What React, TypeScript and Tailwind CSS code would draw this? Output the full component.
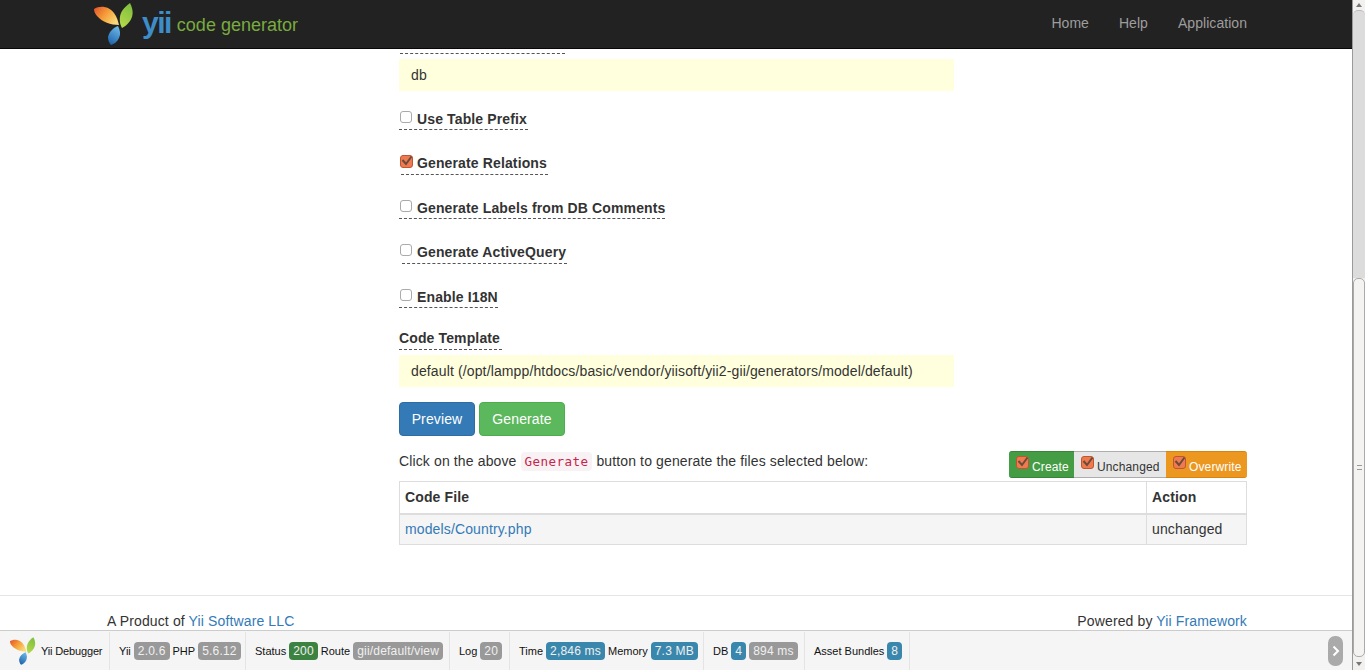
import { ReactNode } from 'react';

function YiiLeaves({ className }: { className: string }) {
  return (
    <svg viewBox="0 0 40 46" className={className}>
      <defs>
        <linearGradient id="leafOrange" x1="0" y1="0" x2="1" y2="0.6">
          <stop offset="0" stopColor="#e2502a" />
          <stop offset="0.55" stopColor="#f6a13a" />
          <stop offset="1" stopColor="#f8d879" />
        </linearGradient>
        <linearGradient id="leafGreen" x1="0.7" y1="0" x2="0.3" y2="1">
          <stop offset="0" stopColor="#7fbf3f" />
          <stop offset="1" stopColor="#b6d84a" />
        </linearGradient>
        <linearGradient id="leafBlue" x1="0.7" y1="0" x2="0.3" y2="1">
          <stop offset="0" stopColor="#6bb8e8" />
          <stop offset="1" stopColor="#1f63ab" />
        </linearGradient>
      </defs>
      <path d="M0 8 C6 4 15 5 20 12 C23 16 24 20 25 24 C17 24 8 21 3 15 C1 13 0 10 0 8 Z" fill="url(#leafOrange)" />
      <path d="M36 2 C39 8 40 14 36 20 C33 24 30 26 28 27 C25 22 25 15 28 10 C30 7 33 4 36 2 Z" fill="url(#leafGreen)" />
      <path d="M24 25 C26 29 27 33 25 37 C23 41 20 43 17 44 C15 42 14 39 14 36 C15 31 19 27 24 25 Z" fill="url(#leafBlue)" />
    </svg>
  );
}

function CheckIcon() {
  return (
    <span className="relative inline-block h-[13px] w-[13px] rounded-[3px] border border-[#c0562f] bg-[#ee7a50]">
      <svg viewBox="0 0 13 13" className="absolute left-[-1px] top-[-2px] h-[13px] w-[13px]">
        <path d="M2.5 6 L6 10 L11.5 2.5" fill="none" stroke="#6b4a3a" strokeWidth="2" />
      </svg>
    </span>
  );
}

function EmptyBox() {
  return <span className="inline-block h-[12px] w-[12px] rounded-[3px] border border-[#aaa] bg-white" />;
}

function CheckField({ label, checked, wrap }: { label: string; checked?: boolean; wrap: string }) {
  return (
    <div className={wrap}>
      <div className="relative flex h-[20px] items-center">
        <span className="absolute left-[1px] top-[2px] flex">{checked ? <CheckIcon /> : <EmptyBox />}</span>
        <span className="ml-[18px] font-bold">{label}</span>
      </div>
    </div>
  );
}

function Badge({ children, color = 'bg-[#999]' }: { children: ReactNode; color?: string }) {
  return (
    <span className={`whitespace-nowrap rounded-[4px] ${color} px-[4px] text-[12px] leading-[18px] tracking-[0.2px] text-[#f0f0f0]`}>
      {children}
    </span>
  );
}

function DebugBlock({ children, width }: { children: ReactNode; width: string }) {
  return (
    <div className={`flex h-full items-center gap-[3px] whitespace-nowrap border-r border-[#e4e4e4] pl-[9px] ${width}`}>{children}</div>
  );
}

function FilterButton({ label, color, width, first, last }: { label: string; color: string; width: string; first?: boolean; last?: boolean }) {
  return (
    <span
      className={`flex h-[27px] items-center gap-[3px] border-y pl-[7px] text-[12px] ${width} ${color} ${first ? 'rounded-l-[3px]' : ''} ${last ? 'rounded-r-[3px]' : ''}`}
    >
      <span className="mt-[-5px] flex">
        <CheckIcon />
      </span>
      <span className="mt-[4px]">{label}</span>
    </span>
  );
}

export default function App() {
  return (
    <div className="flex h-[670px] w-[1365px] overflow-hidden bg-white font-['Liberation_Sans',Arial,sans-serif] text-[14px] tracking-[0.13px] text-[#333]">
      <div className="flex h-full w-[1352px] flex-col">
        <header className="flex h-[49px] shrink-0 items-center justify-between border-b border-[#080808] bg-[#222] pl-[94px] pr-[105px]">
          <div className="flex items-center">
            <YiiLeaves className="h-[46px] w-[40px]" />
            <span className="ml-[8px] mt-[-2px] text-[30px] font-bold leading-[40px] tracking-[-1.5px] text-[#3d8dc9]">yii</span>
            <span className="ml-[6px] mt-[3px] text-[18px] tracking-normal text-[#79ab3f]">code generator</span>
          </div>
          <nav className="mt-[-2px] flex gap-[30px] tracking-[0.05px] text-[#9d9d9d]">
            <span>Home</span>
            <span>Help</span>
            <span>Application</span>
          </nav>
        </header>

        <main className="flex-1 pl-[399px] pr-[105px]">
          <div className="ml-[1px] mt-[4px] w-[165px] border-b border-dashed border-[#555]" />
          <div className="mt-[5px] flex h-[32px] w-[555px] items-center bg-[#ffd] px-[12px]">db</div>

          <CheckField wrap="mt-[18px]" label="Use Table Prefix" />
          <div className="w-[129px] border-b border-dashed border-[#555]" />
          <CheckField wrap="mt-[23px]" label="Generate Relations" checked />
          <div className="ml-[2px] mt-[1px] w-[147px] border-b border-dashed border-[#555]" />
          <CheckField wrap="mt-[23px]" label="Generate Labels from DB Comments" />
          <div className="w-[266px] border-b border-dashed border-[#555]" />
          <CheckField wrap="mt-[23px]" label="Generate ActiveQuery" />
          <div className="ml-[3px] mt-[1px] w-[165px] border-b border-dashed border-[#555]" />
          <CheckField wrap="mt-[23px]" label="Enable I18N" />
          <div className="w-[99px] border-b border-dashed border-[#555]" />

          <div className="mt-[20px] flex h-[21px] items-center font-bold">Code Template</div>
          <div className="w-[103px] border-b border-dashed border-[#555]" />
          <div className="mt-[5px] flex h-[32px] w-[555px] items-center bg-[#ffd] px-[12px]">
            default (/opt/lampp/htdocs/basic/vendor/yiisoft/yii2-gii/generators/model/default)
          </div>

          <div className="mt-[15px] flex gap-[4px]">
            <span className="flex h-[34px] w-[76px] items-center justify-center rounded-[4px] border border-[#2e6da4] bg-[#337ab7] text-white">Preview</span>
            <span className="flex h-[34px] w-[86px] items-center justify-center rounded-[4px] border border-[#4cae4c] bg-[#5cb85c] text-white">Generate</span>
          </div>

          <div className="mt-[15px] flex h-[27px] items-start justify-between">
            <p className="flex items-center leading-[20px]">
              Click on the above
              <code className="mx-[4px] rounded-[4px] bg-[#f9f2f4] px-[4px] font-['DejaVu_Sans_Mono',monospace] text-[12.6px] leading-[19px] tracking-[0.4px] text-[#c7254e]">Generate</code>
              button to generate the files selected below:
            </p>
            <div className="flex">
              <FilterButton first label="Create" width="w-[65px]" color="border-[#398439] bg-[#449d44] text-white" />
              <FilterButton label="Unchanged" width="w-[92px]" color="border-[#adadad] bg-[#e6e6e6] text-[#333]" />
              <FilterButton last label="Overwrite" width="w-[81px]" color="border-[#d58512] bg-[#ec971f] text-white" />
            </div>
          </div>

          <table className="mt-[3px] w-full border-collapse border border-[#ddd]">
            <thead>
              <tr className="h-[32px]">
                <th className="border border-b-2 border-[#ddd] px-[5px] text-left font-bold">Code File</th>
                <th className="w-[100px] border border-b-2 border-[#ddd] px-[5px] text-left font-bold">Action</th>
              </tr>
            </thead>
            <tbody>
              <tr className="h-[31px] bg-[#f5f5f5]">
                <td className="border border-[#ddd] px-[5px] text-[#337ab7]">models/Country.php</td>
                <td className="border border-[#ddd] px-[5px]">unchanged</td>
              </tr>
            </tbody>
          </table>
        </main>

        <footer className="flex h-[35px] shrink-0 items-start justify-between border-t border-[#e5e5e5] pl-[107px] pr-[105px] pt-[15px] leading-[20px]">
          <span>
            A Product of <span className="text-[#337ab7]">Yii Software LLC</span>
          </span>
          <span>
            Powered by <span className="text-[#337ab7]">Yii Framework</span>
          </span>
        </footer>

        <div className="flex h-[40px] shrink-0 items-center border-t border-[#ccc] bg-[#f5f5f5] pt-[1px] text-[11px] tracking-normal text-[#111]">
          <div className="flex h-full w-[110px] items-center whitespace-nowrap border-r border-[#e4e4e4] pl-[9px]">
            <YiiLeaves className="h-[30px] w-[28px]" />
            <span className="ml-[4px] tracking-[-0.15px]">Yii Debugger</span>
          </div>
          <DebugBlock width="w-[136px]">
            <span>Yii</span>
            <Badge>2.0.6</Badge>
            <span>PHP</span>
            <Badge>5.6.12</Badge>
          </DebugBlock>
          <DebugBlock width="w-[204px]">
            <span>Status</span>
            <Badge color="bg-[#3c8341]">200</Badge>
            <span>Route</span>
            <Badge>gii/default/view</Badge>
          </DebugBlock>
          <DebugBlock width="w-[60px]">
            <span>Log</span>
            <Badge>20</Badge>
          </DebugBlock>
          <DebugBlock width="w-[194px]">
            <span>Time</span>
            <Badge color="bg-[#3a87ad]">2,846 ms</Badge>
            <span>Memory</span>
            <Badge color="bg-[#3a87ad]">7.3 MB</Badge>
          </DebugBlock>
          <DebugBlock width="w-[101px]">
            <span>DB</span>
            <Badge color="bg-[#3a87ad]">4</Badge>
            <Badge>894 ms</Badge>
          </DebugBlock>
          <DebugBlock width="w-[105px]">
            <span>Asset Bundles</span>
            <Badge color="bg-[#3a87ad]">8</Badge>
          </DebugBlock>
          <div className="ml-auto mr-[9px] flex h-[30px] w-[15px] items-center justify-center rounded-[7px] bg-[#aaa]">
            <svg viewBox="0 0 10 12" className="h-[12px] w-[10px]">
              <path d="M2.5 1.5 L7 6 L2.5 10.5" fill="none" stroke="#fff" strokeWidth="2" />
            </svg>
          </div>
        </div>
      </div>

      <div className="flex h-full w-[13px] flex-col border-l border-[#9a9a9a] bg-[#f2f1ef]">
        <div className="flex h-[10px] shrink-0 justify-center">
          <span className="mt-[3px] h-0 w-0 border-x-[3px] border-b-[4px] border-x-transparent border-b-[#777]" />
        </div>
        <div className="h-[268px] shrink-0 rounded-t-[5px] border-t border-[#bbb] bg-[#dcdcdc]" />
        <div className="flex h-[379px] shrink-0 items-center justify-center rounded-[5px] border border-[#aaa] bg-[#f4f3f1]">
          <span className="h-[5px] w-[5px] border-y border-[#999]" />
        </div>
        <div className="flex flex-1 items-center justify-center">
          <span className="h-0 w-0 border-x-[3px] border-t-[4px] border-x-transparent border-t-[#777]" />
        </div>
      </div>
    </div>
  );
}
